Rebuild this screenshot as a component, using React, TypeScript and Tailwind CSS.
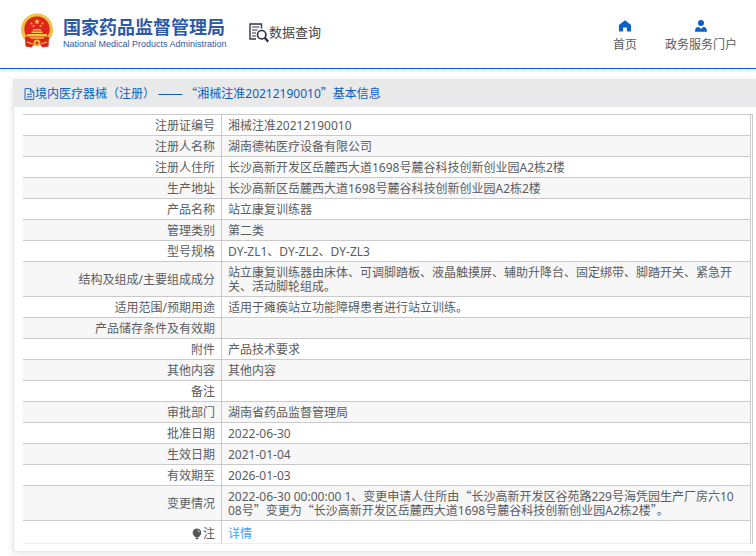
import React from 'react';

interface InfoRow {
  label: string;
  value: React.ReactNode;
}

// Chinese quotes take a full em, so they come from the CJK font
const Cjk: React.FC<{ children: string }> = ({ children }) => (
  <span className="font-['Noto_Sans_CJK_SC',sans-serif] leading-[8px]">{children}</span>
);

const rows: InfoRow[] = [
  { label: '注册证编号', value: '湘械注准20212190010' },
  { label: '注册人名称', value: '湖南德祐医疗设备有限公司' },
  { label: '注册人住所', value: '长沙高新开发区岳麓西大道1698号麓谷科技创新创业园A2栋2楼' },
  { label: '生产地址', value: '长沙高新区岳麓西大道1698号麓谷科技创新创业园A2栋2楼' },
  { label: '产品名称', value: '站立康复训练器' },
  { label: '管理类别', value: '第二类' },
  { label: '型号规格', value: 'DY-ZL1、DY-ZL2、DY-ZL3' },
  {
    label: '结构及组成/主要组成成分',
    value: '站立康复训练器由床体、可调脚踏板、液晶触摸屏、辅助升降台、固定绑带、脚踏开关、紧急开关、活动脚轮组成。',
  },
  { label: '适用范围/预期用途', value: '适用于瘫痪站立功能障碍患者进行站立训练。' },
  { label: '产品储存条件及有效期', value: '' },
  { label: '附件', value: '产品技术要求' },
  { label: '其他内容', value: '其他内容' },
  { label: '备注', value: '' },
  { label: '审批部门', value: '湖南省药品监督管理局' },
  { label: '批准日期', value: '2022-06-30' },
  { label: '生效日期', value: '2021-01-04' },
  { label: '有效期至', value: '2026-01-03' },
  {
    label: '变更情况',
    value: (
      <>
        2022-06-30 00:00:00 1、变更申请人住所由<Cjk>“</Cjk>长沙高新开发区谷苑路229号海凭园生产厂房六10
        <br />
        08号<Cjk>”</Cjk>变更为<Cjk>“</Cjk>长沙高新开发区岳麓西大道1698号麓谷科技创新创业园A2栋2楼<Cjk>”</Cjk>。
      </>
    ),
  },
];

const Emblem = () => (
  <svg className="h-[36px] w-[34px]" viewBox="0 0 34 36" aria-hidden="true">
    <circle cx="17" cy="16.5" r="16" fill="#e9b53a" />
    <circle cx="17" cy="16.5" r="14.6" fill="none" stroke="#f6d568" strokeWidth="1.2" strokeDasharray="2 1" />
    <path d="M5 24l4 0 8 4 8-4 4 0-.5 9.500-6 1-2-2.500h-7l-2 2.500-6-1z" fill="#d8261c" />
    <circle cx="17" cy="16" r="12.600" fill="#e0231b" />
    <path d="M17 5.500l.8 2.200h2.300l-1.900 1.400.7 2.200-1.900-1.300-1.900 1.300.7-2.200-1.900-1.400h2.300z" fill="#f8d34c" />
    <g fill="#f3c545">
      <circle cx="11.500" cy="10.500" r="1" />
      <circle cx="22.500" cy="10.500" r="1" />
      <circle cx="13.500" cy="13" r="1" />
      <circle cx="20.500" cy="13" r="1" />
      <path d="M12.500 17.500l1-1.500h7l1 1.500zM11.500 18.500h11v1.500h-11zM7 21h20v2.500H7z" />
      <path d="M9 24h16l-2 2H11z" fill="#e9983a" />
    </g>
    <circle cx="17" cy="30" r="3.500" fill="#efb93c" />
    <circle cx="17" cy="30" r="1.400" fill="#d8261c" />
    <path d="M7 29l6 2M27 29l-6 2" stroke="#f0bf45" strokeWidth="1.200" />
  </svg>
);

const SearchDocIcon = () => (
  <svg className="h-[20px] w-[20px]" viewBox="0 0 20 20" fill="none" stroke="#35354d" aria-hidden="true">
    <path d="M7 16H1V1h11.500v4.500" strokeWidth="1.400" />
    <path d="M3 4h7.500M3 7h5.500M3 10h4M3 13h4" strokeWidth="1.200" />
    <circle cx="12.700" cy="11.700" r="4.200" strokeWidth="1.700" />
    <path d="M15.700 14.700l3.600 4" strokeWidth="2.400" />
  </svg>
);

const HomeIcon = () => (
  <svg className="h-[12px] w-[12px]" viewBox="0 0 12 12" fill="#0a60c8" aria-hidden="true">
    <path d="M6 .3L0 5v6.500h4.100V7.500h3.800v4H12V5z" />
  </svg>
);

const UserIcon = () => (
  <svg className="h-[12px] w-[12px]" viewBox="0 0 12 12" fill="#0a60c8" aria-hidden="true">
    <circle cx="6" cy="3" r="3" />
    <path d="M0 11.700c0-3 1-4.700 3.500-5L6 8.900l2.500-2.200c2.500.3 3.500 2 3.500 5z" />
  </svg>
);

const DocIcon = () => (
  <svg className="h-[12px] w-[11px]" viewBox="0 0 11 12" fill="none" stroke="#1d6bc9" aria-hidden="true">
    <path d="M1 .6h5.500L9.800 4v7.400H1zM6.500.6V4h3.300M3 6.300h5M3 8.800h5" />
  </svg>
);

const BulbIcon = () => (
  <svg className="h-[12px] w-[10px]" viewBox="0 0 10 12" aria-hidden="true">
    <path d="M5 .5a4.300 4.300 0 0 0-2.700 7.600L3.500 9.500h3l1.200-1.400A4.300 4.300 0 0 0 5 .5zM3.700 10h2.600v1.200H3.700z" fill="#55565a" />
    <path d="M5.500 2.200a2.500 2.500 0 0 1 1.900 2" stroke="#fff" strokeWidth=".8" fill="none" />
  </svg>
);

const Header = () => (
  <header>
    <div className="flex h-[68px] items-start justify-between pl-5 pr-[19px]">
      <div className="flex items-start">
        <div className="pt-[13px]">
          <Emblem />
        </div>
        <div className="ml-[9px] w-[162px] pt-[17px] text-[#2c5aa8]">
          <div className="text-[18px] font-bold leading-5">国家药品监督管理局</div>
          <div className="mt-[2px] font-['Liberation_Sans',sans-serif] text-[9px] leading-[10px] whitespace-nowrap">
            National Medical Products Administration
          </div>
        </div>
        <div className="ml-6 flex items-start pt-[23px]">
          <SearchDocIcon />
          <span className="text-[13px] leading-[18px] text-[#444444]">数据查询</span>
        </div>
      </div>
      <nav className="flex gap-7 pt-5 text-xs leading-[14px]">
        <a href="#home" className="flex flex-col items-center gap-[6px]">
          <HomeIcon />
          首页
        </a>
        <a href="#portal" className="flex flex-col items-center gap-[6px]">
          <UserIcon />
          政务服务门户
        </a>
      </nav>
    </div>
    <div className="h-px bg-[#0a60c8]" />
    <div className="h-[3px] bg-[conic-gradient(#ffffff_25%,#e6e6e6_0_50%,#ffffff_0_75%,#e6e6e6_0)] bg-size-[2px_2px]" />
  </header>
);

const App: React.FC = () => (
  <div className="bg-white pb-[4px] font-['Noto_Sans','Noto_Sans_CJK_SC',sans-serif] text-xs text-[#5a5c61]">
    <Header />
    <main className="ml-[13px] mt-[7px] border-b border-l border-[#e6e6e6] shadow-[0_2px_8px_rgba(0,0,0,0.1)]">
      <h1 className="flex h-[28px] items-center border-b border-[#ebeef5] bg-[#e9e9e9] pl-[10px] pt-[2px] text-[#0a60c0]">
        <DocIcon />
        <span className="whitespace-pre">
          境内医疗器械（注册） <span className="font-['Liberation_Sans',sans-serif]">——</span> <Cjk>“</Cjk>湘械注准20212190010<Cjk>”</Cjk>基本信息
        </span>
      </h1>
      <div className="pb-[7px] pl-[9px] pr-[3px] pt-[7px]">
        <div className="border-r border-t border-[#cacaca] pr-px">
          <table className="w-full table-fixed border-separate border-spacing-0 border-r border-[#cacaca] leading-[14px]">
            <tbody>
              {rows.map(({ label, value }) => (
                <tr key={label} className="even:bg-[#f7f7f7]">
                  <th
                    scope="row"
                    className="h-[21px] w-[199px] border-b border-r border-[#cacaca] px-[6px] pb-[2px] pt-1 text-right font-normal"
                  >
                    {label}
                  </th>
                  <td className="border-b border-[#cacaca] px-[6px] pb-[2px] pt-1 break-all">{value}</td>
                </tr>
              ))}
              <tr>
                <th
                  scope="row"
                  className="h-[23px] border-b border-r border-b-[#ebeef5] border-r-[#cacaca] px-[6px] pt-[3px] font-normal"
                >
                  <span className="flex items-center justify-end gap-px">
                    <BulbIcon />注
                  </span>
                </th>
                <td className="border-b border-[#ebeef5] px-[6px] pt-[3px]">
                  <a href="#detail" className="text-[#409eff]">
                    详情
                  </a>
                </td>
              </tr>
            </tbody>
          </table>
        </div>
      </div>
    </main>
  </div>
);

export default App;
